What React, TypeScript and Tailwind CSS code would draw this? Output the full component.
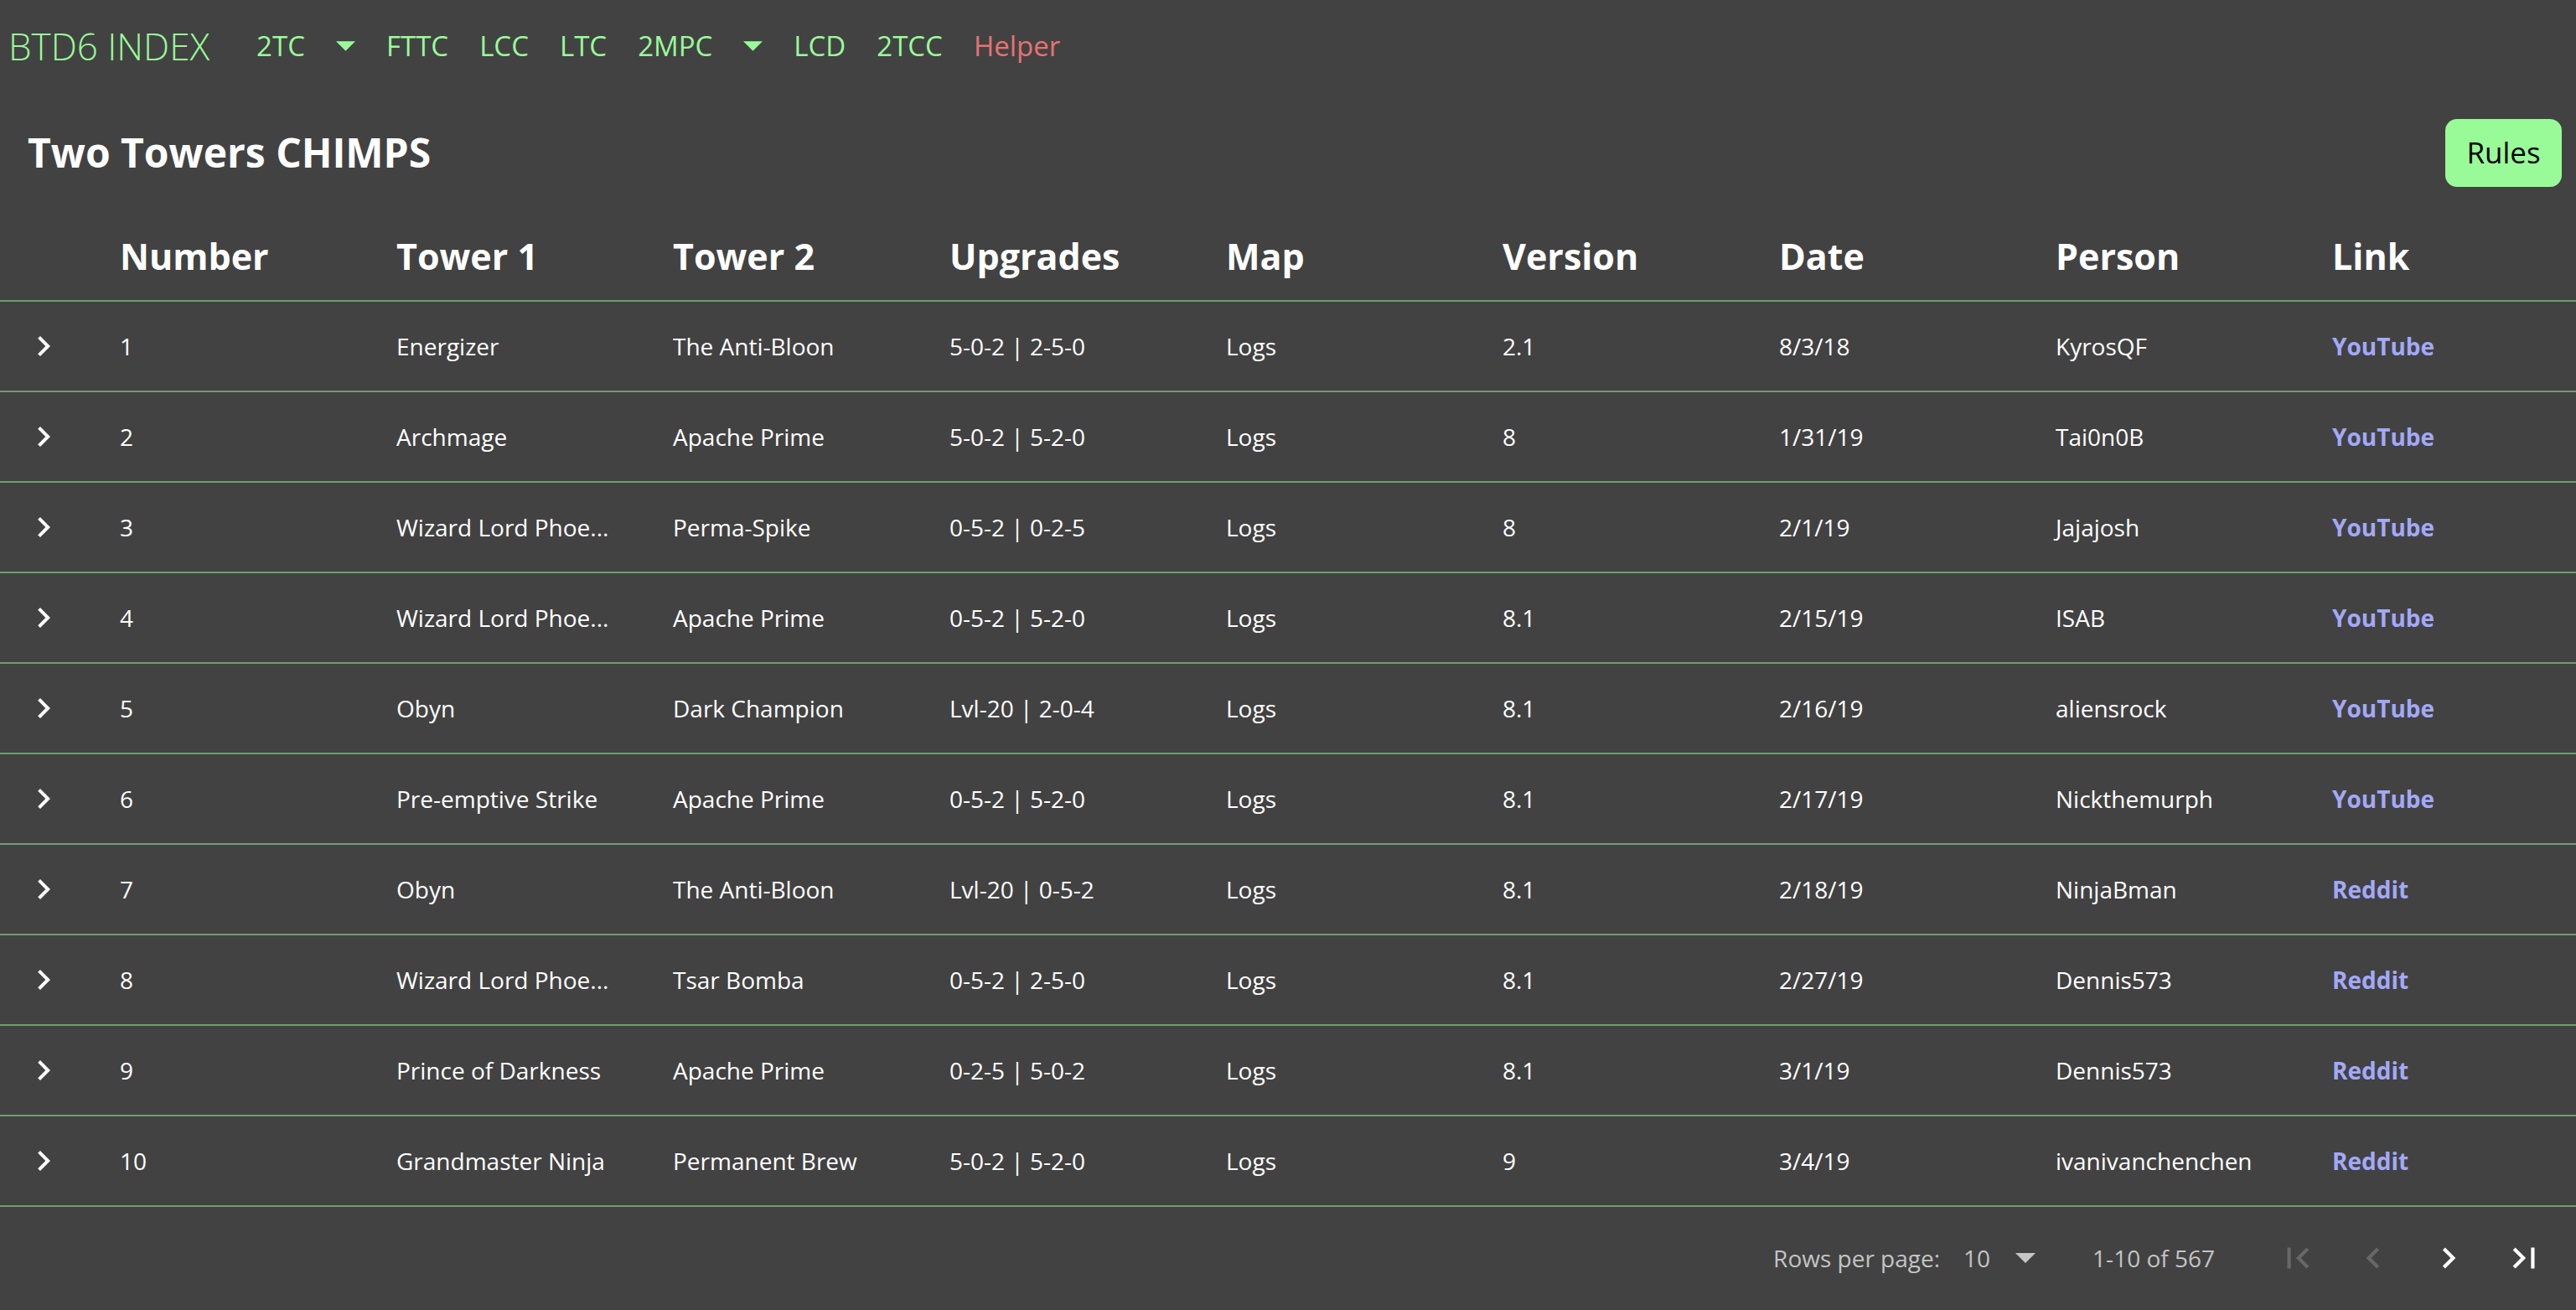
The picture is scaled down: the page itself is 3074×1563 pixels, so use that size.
import React from 'react';

const rows = [
    ['1', 'Energizer', 'The Anti-Bloon', '5-0-2 | 2-5-0', 'Logs', '2.1', '8/3/18', 'KyrosQF', 'YouTube'],
    ['2', 'Archmage', 'Apache Prime', '5-0-2 | 5-2-0', 'Logs', '8', '1/31/19', 'Tai0n0B', 'YouTube'],
    ['3', 'Wizard Lord Phoe...', 'Perma-Spike', '0-5-2 | 0-2-5', 'Logs', '8', '2/1/19', 'Jajajosh', 'YouTube'],
    ['4', 'Wizard Lord Phoe...', 'Apache Prime', '0-5-2 | 5-2-0', 'Logs', '8.1', '2/15/19', 'ISAB', 'YouTube'],
    ['5', 'Obyn', 'Dark Champion', 'Lvl-20 | 2-0-4', 'Logs', '8.1', '2/16/19', 'aliensrock', 'YouTube'],
    ['6', 'Pre-emptive Strike', 'Apache Prime', '0-5-2 | 5-2-0', 'Logs', '8.1', '2/17/19', 'Nickthemurph', 'YouTube'],
    ['7', 'Obyn', 'The Anti-Bloon', 'Lvl-20 | 0-5-2', 'Logs', '8.1', '2/18/19', 'NinjaBman', 'Reddit'],
    ['8', 'Wizard Lord Phoe...', 'Tsar Bomba', '0-5-2 | 2-5-0', 'Logs', '8.1', '2/27/19', 'Dennis573', 'Reddit'],
    ['9', 'Prince of Darkness', 'Apache Prime', '0-2-5 | 5-0-2', 'Logs', '8.1', '3/1/19', 'Dennis573', 'Reddit'],
    ['10', 'Grandmaster Ninja', 'Permanent Brew', '5-0-2 | 5-2-0', 'Logs', '9', '3/4/19', 'ivanivanchenchen', 'Reddit'],
];

const headers = ['Number', 'Tower 1', 'Tower 2', 'Upgrades', 'Map', 'Version', 'Date', 'Person', 'Link'];

function Icon({ d, className }: { d: string; className?: string }) {
    return (
        <svg viewBox="0 0 24 24" className={className} fill="currentColor">
            <path d={d} />
        </svg>
    );
}

const CHEVRON_RIGHT = 'M8.59 16.59 13.17 12 8.59 7.41 10 6l6 6-6 6z';
const CHEVRON_LEFT = 'M15.41 16.59 10.83 12l4.58-4.59L14 6l-6 6 6 6z';
const FIRST_PAGE = 'M18.41 16.59 13.82 12l4.59-4.59L17 6l-6 6 6 6zM6 6h2v12H6z';
const LAST_PAGE = 'M5.59 7.41 10.18 12l-4.59 4.59L7 18l6-6-6-6zM16 6h2v12h-2z';

function NavArrow() {
    return (
        <svg viewBox="0 0 24 12" className="w-[23px] h-[12px] text-[#98fb98]" fill="currentColor">
            <path d="M0 0h24L12 12z" />
        </svg>
    );
}

export default function App() {
    return (
        <div className="min-h-screen overflow-hidden bg-[#424242] text-white" style={{ fontFamily: '"Open Sans", "Noto Sans", sans-serif' }}>
            {/* top nav */}
            <nav className="h-[110px] flex items-center pl-[10px] text-[#98fb98]">
                <span className="text-[44px] font-light mr-[56px]">BTD6 INDEX</span>
                <div className="flex items-center gap-[37px] text-[33px]">
                    <span>2TC</span>
                    <NavArrow />
                    <span>FTTC</span>
                    <span>LCC</span>
                    <span>LTC</span>
                    <span>2MPC</span>
                    <NavArrow />
                    <span>LCD</span>
                    <span>2TCC</span>
                    <span className="text-[#e57373]">Helper</span>
                </div>
            </nav>

            {/* title */}
            <div className="h-[144px] flex items-center justify-between pl-[33px] pr-[17px]">
                <h1 className="text-[48px] font-bold">Two Towers CHIMPS</h1>
                <button className="w-[139px] h-[81px] rounded-[14px] bg-[#98fb98] text-black text-[35px]">Rules</button>
            </div>

            {/* table */}
            <div className="grid grid-cols-[111px_repeat(9,330px)] h-[106px] items-center border-b-2 border-[#6d9e6d]">
                <div />
                {headers.map((h) => (
                    <div key={h} className="pl-[32px] text-[43px] font-bold">{h}</div>
                ))}
            </div>
            {rows.map((r) => (
                <div key={r[0]} className="grid grid-cols-[111px_repeat(9,330px)] h-[108px] items-center border-b-2 border-[#6d9e6d] text-[28px]">
                    <div className="pl-[28px] flex items-center">
                        <Icon d={CHEVRON_RIGHT} className="w-[48px] h-[48px] text-white" />
                    </div>
                    {r.map((c, i) => (
                        <div
                            key={i}
                            className={i === 8 ? 'pl-[32px] font-bold text-[#a3a9f7] whitespace-nowrap' : 'pl-[32px] whitespace-nowrap overflow-hidden'}
                        >
                            {c}
                        </div>
                    ))}
                </div>
            ))}

            {/* pagination */}
            <div className="h-[121px] flex items-center justify-end pr-[17px] text-[28px] text-white/70">
                <span>Rows per page:</span>
                <span className="ml-[28px]">10</span>
                <svg viewBox="0 0 24 12" className="ml-[30px] w-[24px] h-[12px]" fill="currentColor">
                    <path d="M0 0h24L12 12z" />
                </svg>
                <span className="ml-[68px]">1-10 of 567</span>
                <div className="flex items-center ml-[54px]">
                    <button className="w-[90px] flex justify-center text-white/20">
                        <Icon d={FIRST_PAGE} className="w-[50px] h-[50px]" />
                    </button>
                    <button className="w-[90px] flex justify-center text-white/20">
                        <Icon d={CHEVRON_LEFT} className="w-[50px] h-[50px]" />
                    </button>
                    <button className="w-[90px] flex justify-center text-white">
                        <Icon d={CHEVRON_RIGHT} className="w-[50px] h-[50px]" />
                    </button>
                    <button className="w-[90px] flex justify-center text-white">
                        <Icon d={LAST_PAGE} className="w-[50px] h-[50px]" />
                    </button>
                </div>
            </div>
        </div>
    );
}
